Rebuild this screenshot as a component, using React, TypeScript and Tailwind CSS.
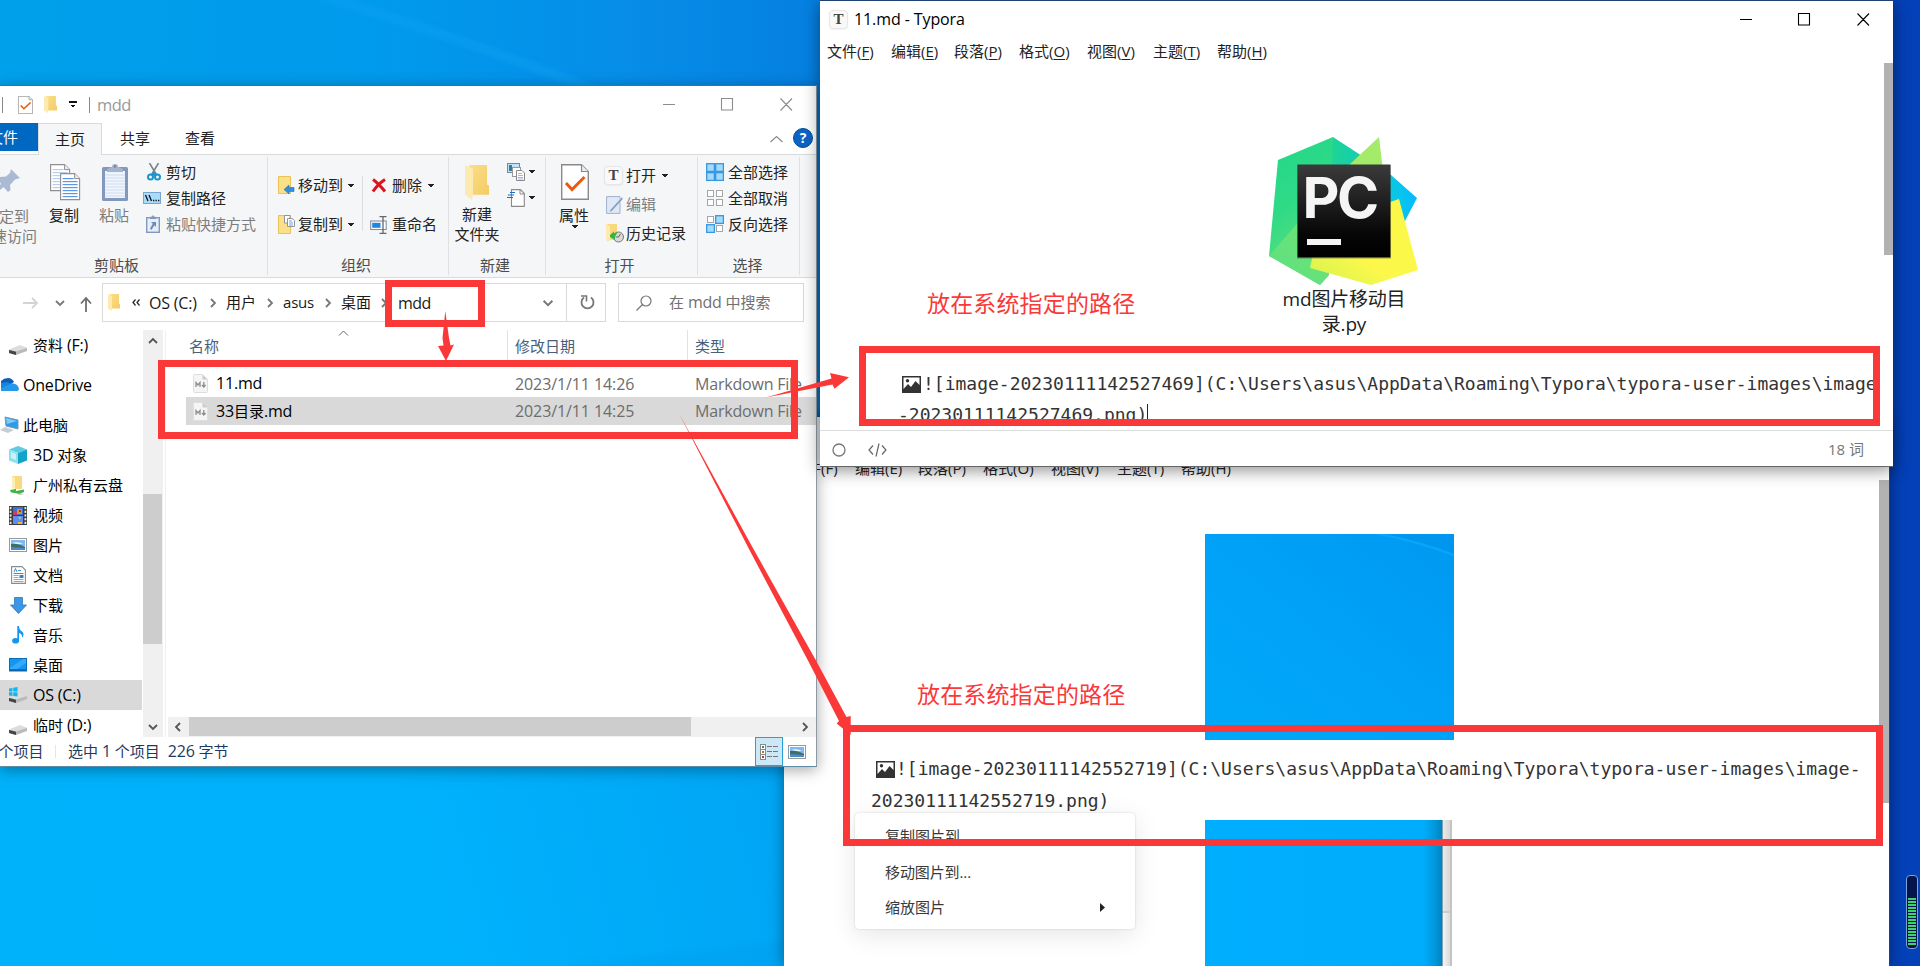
import React from "react";

type Kids = { children?: React.ReactNode; className?: string };

const Row = ({ children, className = "" }: Kids) => (
  <div className={`flex items-center whitespace-nowrap ${className}`}>{children}</div>
);

const Latin = ({ children, className = "" }: Kids) => (
  <span className={`text-[16px] leading-none tracking-[-0.2px] ${className}`}>{children}</span>
);

/* ---------- small glyphs ---------- */

const Caret = ({ className = "" }: Kids) => (
  <svg className={`h-[4px] w-[6px] shrink-0 ${className}`} viewBox="0 0 6 4" shapeRendering="crispEdges">
    <path d="M0 0H6L3 3.4Z" fill="#222" />
  </svg>
);

const Chevron = ({ dir, className = "" }: { dir: "r" | "d" | "u" | "l"; className?: string }) => {
  const d = { r: "M4 2L8 6L4 10", d: "M2 4L6 8L10 4", u: "M2 8L6 4L10 8", l: "M8 2L4 6L8 10" }[dir];
  return (
    <svg className={`h-3 w-3 shrink-0 ${className}`} viewBox="0 0 12 12">
      <path d={d} fill="none" stroke="currentColor" strokeWidth="1.8" />
    </svg>
  );
};

const Folder = ({ className = "" }: Kids) => (
  <svg className={`shrink-0 ${className}`} viewBox="0 0 24 34" preserveAspectRatio="none">
    <defs>
      <linearGradient id="fold" x1="0" y1="0" x2="1" y2="1">
        <stop offset="0" stopColor="#fbdf8b" />
        <stop offset="1" stopColor="#f3cb62" />
      </linearGradient>
    </defs>
    <path d="M4 0H22V19L24 20V29H7Z" fill="url(#fold)" />
    <path d="M0 0L8 4V29L7 34L0 29Z" fill="#fdeab0" />
  </svg>
);

const Page = ({ x, y, w, h, lines }: { x: number; y: number; w: number; h: number; lines: string }) => (
  <g>
    <path d={`M${x} ${y}h${w - 5}l5 5v${h - 5}h${-w}z`} fill="#fff" stroke="#8f8f8f" strokeWidth="1.1" />
    <path d={`M${x + w - 5} ${y}v5h5`} fill="#eee" stroke="#8f8f8f" />
    {[5, 8, 11, 14, 17, 20, 23].map((o) => (
      <path key={o} d={`M${x + 2} ${y + o}h${o === 5 ? w - 8 : w - 4}`} stroke={lines} strokeWidth="1.2" />
    ))}
  </g>
);

const CopyIcon = () => (
  <svg className="h-[37px] w-[31px]" viewBox="0 0 31 37">
    <Page x={0.6} y={0.6} w={19} h={26} lines="#b4cdf0" />
    <Page x={10.6} y={9.6} w={19} h={26} lines="#5b97e8" />
  </svg>
);

const PasteIcon = () => (
  <svg className="h-[37px] w-[26px]" viewBox="0 0 26 37">
    <rect y="3" width="26" height="34" rx="1.5" fill="#8299bd" />
    <rect x="3" y="7" width="20" height="27" fill="#f0f5fc" />
    {[11, 14, 17, 20, 23, 26, 29, 32].map((y) => (
      <path key={y} d={`M3 ${y}h20`} stroke="#cfdcee" />
    ))}
    <path d="M5 8V5l5-2a3 3 0 0 1 6 0l5 2v3z" fill="#a5b3cc" />
    <circle cx="13" cy="2.5" r="1.2" fill="#72809d" />
  </svg>
);

const PinIcon = () => (
  <svg className="h-[26px] w-[21px]" viewBox="0 0 21 26">
    <path d="M11 1L20 10L15 11.5L10 17L10.500 22L8 24L3.500 19L0 22V17L1 16L0 14V9L6 8.500L10 5Z" fill="#a9bad3" />
  </svg>
);

const Scissors = () => (
  <svg className="h-[18px] w-[14px]" viewBox="0 0 14 18">
    <path d="M2.500 0L9 11M11.500 0L5 11" stroke="#7b858d" strokeWidth="1.6" />
    <circle cx="3.500" cy="14" r="2.500" fill="none" stroke="#1d93cf" strokeWidth="2" />
    <circle cx="10.500" cy="14" r="2.500" fill="none" stroke="#1d93cf" strokeWidth="2" />
    <path d="M3.500 11.500L7 8.500L10.500 11.500L7 13Z" fill="#1d93cf" />
  </svg>
);

const PathIcon = () => (
  <svg className="h-[12px] w-[18px]" viewBox="0 0 18 12">
    <rect x=".5" y=".5" width="17" height="11" fill="#a9dcfa" stroke="#77a7cb" />
    <path d="M2.500 3L5 9M6 3L8.500 9" stroke="#111" strokeWidth="1.3" />
    <path d="M10 8.500h1.300M12.500 8.500h1.300M15 8.500h1.300" stroke="#111" strokeWidth="1.3" />
  </svg>
);

const ShortcutIcon = () => (
  <svg className="h-[18px] w-[14px]" viewBox="0 0 14 18">
    <rect x=".7" y="2.700" width="12.600" height="14.600" fill="#e6eefa" stroke="#8299bd" strokeWidth="1.4" />
    <path d="M4 4V2l2-.5L7 0l1 1.500L10 2v2z" fill="#8299bd" />
    <path d="M5 7h5v5l-1.700-1.700L5.500 15L4 13.500L6.800 8.800Z" fill="#6f89b2" />
  </svg>
);

const MoveIcon = () => (
  <svg className="h-[19px] w-[17px]" viewBox="0 0 17 19">
    <path d="M.5.5H12.500V17.500H.5Z" fill="#fbe08a" stroke="#e8c258" />
    <path d="M6 13.500L11 9V11.500H16V15.500H11V18Z" fill="#2f8fe0" stroke="#1b73c0" strokeWidth=".6" />
  </svg>
);

const CopyToIcon = () => (
  <svg className="h-[19px] w-[17px]" viewBox="0 0 17 19">
    <path d="M.5.5H12.500V18.500H.5Z" fill="#fbe08a" stroke="#e8c258" />
    <path d="M6.500.5H12V8H6.500Z" fill="#fff" stroke="#8a8a8a" strokeWidth=".9" />
    <path d="M9.500 3.500H14L16.500 5.500V11.500H9.500Z" fill="#fff" stroke="#8a8a8a" strokeWidth=".9" />
    <path d="M11 6h3M11 8h4M11 10h4" stroke="#5b97e8" strokeWidth=".9" />
  </svg>
);

const DeleteIcon = () => (
  <svg className="h-[15px] w-[16px]" viewBox="0 0 16 15">
    <path d="M2 1.500Q7 5 14 13.500M14 1.500Q7 6 2 13.500" fill="none" stroke="#dd1420" strokeWidth="3.1" />
  </svg>
);

const RenameIcon = () => (
  <svg className="h-[18px] w-[17px]" viewBox="0 0 17 18">
    <rect x=".7" y="5" width="15.500" height="8.500" fill="#fff" stroke="#8a8f96" strokeWidth="1.1" />
    <rect x="2.200" y="6.800" width="8.300" height="5" fill="#1f86e0" />
    <path d="M9.500.7h7M13 .7V17.300M9.500 17.300h7" stroke="#63686e" strokeWidth="1.3" />
  </svg>
);

const NewItemIcon = () => (
  <svg className="h-[18px] w-[18px]" viewBox="0 0 18 18">
    <rect x=".5" y=".5" width="12" height="9" fill="#bfe3f8" stroke="#6a8ba4" />
    <rect x="2" y="2" width="3" height="6" fill="#3c7b8f" />
    <rect x="5.500" y="4.500" width="8" height="9" fill="#fff" stroke="#999" />
    <path d="M9.500 7.500h5.500l2.500 2.500v7.500h-8z" fill="#fff" stroke="#8a8a8a" />
    <path d="M11 10.500h4M11 12.500h5M11 14.500h5M11 16h5" stroke="#7ba9ea" strokeWidth=".8" />
  </svg>
);

const EasyIcon = () => (
  <svg className="h-[18px] w-[18px]" viewBox="0 0 18 18">
    <path d="M4.500.6H13.500L17.300 4.500V17.400H4.500Z" fill="#fff" stroke="#8a8a8a" strokeWidth="1.1" />
    <path d="M13 .6V5H17.300" fill="none" stroke="#8a8a8a" />
    <path d="M3 3.500h5M1 6h6M0 8.500h6" stroke="#1c6fbf" strokeWidth="1.2" />
  </svg>
);

const PropsIcon = ({ className }: { className: string }) => (
  <svg className={className} viewBox="0 0 28 36" preserveAspectRatio="none">
    <path d="M.7.7H20.500L27.300 7.500V35.300H.7Z" fill="#fff" stroke="#8a8a8a" strokeWidth="1.4" />
    <path d="M20.500.7V7.500H27.300" fill="#ececec" stroke="#8a8a8a" strokeWidth="1.2" />
    <path d="M5 19L11 25.500L23.500 13" fill="none" stroke="#ec5a12" strokeWidth="3" />
  </svg>
);

const TyporaIcon = () => (
  <div className="flex h-[19px] w-[19px] shrink-0 items-center justify-center rounded-[4px] border border-[#e6e6e6] bg-[#f9f9f9] font-['Liberation_Serif',serif] text-[15px] leading-none font-bold text-[#444] shadow-xs">
    T
  </div>
);

const EditIcon = () => (
  <svg className="h-[18px] w-[17px]" viewBox="0 0 17 18">
    <path d="M.6.6H14V17.400H.6Z" fill="#dfe8f5" stroke="#9db0cd" />
    <path d="M16 1L4 14L3 16L5.500 15.500L17 3Z" fill="#7f9cc9" stroke="#fff" strokeWidth=".4" />
  </svg>
);

const HistoryIcon = () => (
  <svg className="h-[19px] w-[18px]" viewBox="0 0 18 19">
    <path d="M1 0H11V16H4L1 17Z" fill="#f8d878" />
    <path d="M0 0L4 2V16L3 18L0 15Z" fill="#fdeab0" />
    <circle cx="12.500" cy="13" r="5" fill="#d7dad7" stroke="#777" />
    <path d="M12.500 13L14.500 10M12.500 13H10" stroke="#444" strokeWidth=".8" />
    <path d="M4 11L8 7.500V9.500L12 8Q8.500 12 9 16L4 13Z" fill="#2fb34a" />
  </svg>
);

const Squares = ({ on }: { on: [boolean, boolean, boolean, boolean] }) => (
  <svg className="h-[18px] w-[18px]" viewBox="0 0 18 18">
    {on.map((v, i) => {
      const x = (i % 2) * 9;
      const y = Math.floor(i / 2) * 9;
      return v ? (
        <rect key={i} x={x + 0.7} y={y + 0.7} width="7.700" height="7.700" fill="#a5dbfa" stroke="#3596e0" strokeWidth="1.3" />
      ) : (
        <rect key={i} x={x + 1.5} y={y + 1.5} width="6" height="6" fill="#fff" stroke="#a6a6a6" />
      );
    })}
  </svg>
);

/* ---------- navigation pane icons ---------- */

const Drive = ({ win = false }: { win?: boolean }) => (
  <svg className="h-[18px] w-[19px]" viewBox="0 0 19 18">
    <path d="M0 11L11 7L18 9V12L7 16L0 14Z" fill="#b9b9b9" />
    <path d="M0 10.500L11 6L18 9L7 12.500Z" fill="#dcdcdc" />
    <path d="M0 11L7 12.700V16L0 14Z" fill="#454545" />
    {win && (
      <g fill="#13b5ea">
        <path d="M0 1.500L3.500 1V4.500H0ZM4.300 .8L8.500 0V4.500H4.300ZM0 5.300H3.500V9L0 8.500ZM4.300 5.300H8.500V9.500L4.300 9Z" />
      </g>
    )}
  </svg>
);

const Cloud = () => (
  <svg className="h-[14px] w-[18px]" viewBox="0 0 18 14">
    <path d="M0 3Q3 0 7 0Q11 0 13 4L6 9L0 8Z" fill="#0f5cb5" />
    <path d="M0 5L6 4L17 9Q19 13 15 13H0Z" fill="#1683dc" />
    <path d="M0 10L10 5.500Q16 5 17.500 9.500Q18 13 15 13H0Z" fill="#2598ea" />
  </svg>
);

const PcIcon = () => (
  <svg className="h-[18px] w-[19px]" viewBox="0 0 19 18">
    <path d="M5 1L18 4V13L6 10Z" fill="#2c9be8" stroke="#7a97ab" strokeWidth="1" />
    <path d="M6 2L17 5L7 8Z" fill="#7dcbf7" />
    <path d="M0 14L5 11L14 14L8 17Z" fill="#c6cdd3" />
  </svg>
);

const CubeIcon = () => (
  <svg className="h-[18px] w-[18px]" viewBox="0 0 18 18">
    <path d="M9 0L18 3.500L9 7L0 3.500Z" fill="#5fcbe2" />
    <path d="M0 3.500L9 7V18L0 14.500Z" fill="#8fe0ec" />
    <path d="M18 3.500L9 7V18L18 14.500Z" fill="#12a3c9" />
    <path d="M2 6L7 8V14L2 12Z" fill="#c8f2f7" />
  </svg>
);

const NetFolder = () => (
  <svg className="h-[19px] w-[17px]" viewBox="0 0 17 19">
    <path d="M2 0H12V13H4Z" fill="#f8da80" />
    <path d="M2 0L5 2V13L2 12Z" fill="#fdeeb8" />
    <path d="M0 14L6 13V15L14 13.500V16L9 18L5 17L1 16.500Z" fill="#3eb34a" />
    <path d="M9 17L14 18.500H8Z" fill="#aaa" />
  </svg>
);

const FilmIcon = () => (
  <svg className="h-[19px] w-[18px]" viewBox="0 0 18 19">
    <rect width="18" height="19" fill="#3d3d3d" />
    {[1, 4.700, 8.400, 12.100, 15.800].map((y) => (
      <g key={y} fill="#e9e9e9">
        <rect x=".7" y={y} width="1.800" height="2.200" />
        <rect x="15.500" y={y} width="1.800" height="2.200" />
      </g>
    ))}
    <rect x="4" y="1" width="10" height="8" fill="#3f6fd0" />
    <rect x="4" y="10" width="10" height="8" fill="#5c8ff0" />
    <path d="M8 3h5v5H8z" fill="#d09a2a" />
    <path d="M4 6h4v3H4z" fill="#cf3c6a" />
    <path d="M9 16h4v2H9zM9 11h3l-1 3z" fill="#f2bb26" />
    <path d="M10 4h2v2h-2z" fill="#b12d1d" />
  </svg>
);

const PhotoIcon = ({ className = "h-[14px] w-[18px]" }: { className?: string }) => (
  <svg className={className} viewBox="0 0 18 14" preserveAspectRatio="none">
    <rect x=".5" y=".5" width="17" height="13" fill="#fff" stroke="#999" />
    <rect x="2" y="2" width="14" height="10" fill="#7fb9f5" />
    <path d="M2 6Q8 5 16 9V12H2Z" fill="#3f6f62" />
    <path d="M2 9L16 10V12H2Z" fill="#4b8bc9" />
    <path d="M3 5Q9 3 14 6L9 6Z" fill="#eef7ff" />
  </svg>
);

const DocIcon = () => (
  <svg className="h-[18px] w-[15px]" viewBox="0 0 15 18">
    <path d="M.6.6H11L14.400 4V17.400H.6Z" fill="#fff" stroke="#8c8c8c" strokeWidth="1.1" />
    <path d="M3 6L4.500 2.500L6 6M7 4.500h3M2.500 7.500h10" stroke="#2d8fd9" fill="none" />
    <path d="M2.500 9.500h5M2.500 11.500h5M2.500 13.500h10M2.500 15.500h10" stroke="#999" strokeWidth=".9" />
    <rect x="8.500" y="9" width="4" height="3" fill="#3a7fc0" />
  </svg>
);

const DownIcon = () => (
  <svg className="h-[17px] w-[17px]" viewBox="0 0 17 17">
    <path d="M4.500.5H12.500V8H16.500L8.500 16.500L.5 8H4.500Z" fill="#3a97e8" stroke="#2b78bd" strokeWidth=".8" />
  </svg>
);

const MusicIcon = () => (
  <svg className="h-[18px] w-[12px]" viewBox="0 0 12 18">
    <ellipse cx="3.600" cy="14.700" rx="3.500" ry="2.800" fill="#1197f0" />
    <path d="M5.300 0H7Q7 3.500 10 5.500Q13 8 10 12Q10.500 8 7 7V15H5.300Z" fill="#1197f0" />
  </svg>
);

const DesktopIcon = () => (
  <svg className="h-[14px] w-[18px]" viewBox="0 0 18 14">
    <rect x=".5" y=".5" width="17" height="12.500" fill="#1296f2" stroke="#0b6dba" />
    <path d="M1 10L14 1H17V5L8 11H1Z" fill="#37abfb" />
    <path d="M1 12h16" stroke="#0a5590" strokeWidth="1.2" />
  </svg>
);

const MdFile = () => (
  <svg className="h-[19px] w-[15px] shrink-0" viewBox="0 0 15 19">
    <path d="M1.500.5H9.500L14.500 5.500V17.500Q14.500 18.500 13.500 18.500H1.500Q.5 18.500 .5 17.500V1.500Q.5.5 1.500.5Z" fill="#f5f5f5" stroke="#dedede" />
    <path d="M9.500 .5V5.500H14.500Z" fill="#ccc" />
    <path d="M3 13V8.500L5 11L7 8.500V13" stroke="#8d8d8d" strokeWidth="1.3" fill="none" />
    <path d="M10.800 8V12.500M9 11L10.800 13L12.600 11" stroke="#8d8d8d" strokeWidth="1.3" fill="none" />
  </svg>
);

/* ---------- explorer ---------- */

const Group = ({ children, className = "", label, labelClass = "" }: Kids & { label: string; labelClass?: string }) => (
  <div className={`flex h-[118px] shrink-0 flex-col border-r border-[#dfe0e2] ${className}`}>
    <div className="flex h-[98px] items-start">{children}</div>
    <div className={`text-center leading-[20px] text-[#4c4c4c] ${labelClass}`}>{label}</div>
  </div>
);

const navItems: { label: React.ReactNode; icon: React.ReactNode; root?: boolean; gap?: boolean; active?: boolean }[] = [
  { label: <>资料 <Latin>(F:)</Latin></>, icon: <span className="mt-[5px]"><Drive /></span> },
  { label: <Latin>OneDrive</Latin>, icon: <Cloud />, root: true, gap: true },
  { label: "此电脑", icon: <PcIcon />, root: true, gap: true },
  { label: <><Latin>3D</Latin> 对象</>, icon: <CubeIcon /> },
  { label: "广州私有云盘", icon: <NetFolder /> },
  { label: "视频", icon: <FilmIcon /> },
  { label: "图片", icon: <PhotoIcon /> },
  { label: "文档", icon: <DocIcon /> },
  { label: "下载", icon: <DownIcon /> },
  { label: "音乐", icon: <MusicIcon /> },
  { label: "桌面", icon: <DesktopIcon /> },
  { label: <Latin>OS (C:)</Latin>, icon: <span className="mt-[2px]"><Drive win /></span>, active: true },
  { label: <>临时 <Latin>(D:)</Latin></>, icon: <span className="mt-[5px]"><Drive /></span> },
];

const Ribbon = () => (
  <div className="flex h-[124px] border-y border-[#d9dadc] bg-[#f5f6f7] pt-[2px] text-[#222]">
    <Group label="剪贴板" className="w-[268px]" labelClass="pr-[34px]">
      <div className="flex w-[40px] flex-col overflow-hidden text-[#7d7d7d]">
        <div className="mt-[11px] h-[38px]"><PinIcon /></div>
        <div className="-ml-[16px] leading-[20px] whitespace-nowrap">固定到</div>
        <div className="-ml-[23px] leading-[20px] whitespace-nowrap">快速访问</div>
      </div>
      <div className="flex w-[48px] flex-col items-center pt-[7px] pl-[2px]">
        <CopyIcon />
        <div className="mt-[4px] pr-[2px] leading-[20px]">复制</div>
      </div>
      <div className="flex w-[52px] flex-col items-center pt-[7px] pl-[2px] text-[#7d7d7d]">
        <PasteIcon />
        <div className="mt-[4px] pr-[2px] leading-[20px]">粘贴</div>
      </div>
      <div className="flex flex-col pt-[2px] pl-[3px]">
        <Row className="h-[26px]"><span className="flex w-[23px] pl-[4px]"><Scissors /></span>剪切</Row>
        <Row className="h-[26px]"><span className="flex w-[23px]"><PathIcon /></span>复制路径</Row>
        <Row className="h-[26px] text-[#7d7d7d]"><span className="flex w-[23px] pl-[3px]"><ShortcutIcon /></span>粘贴快捷方式</Row>
      </div>
    </Group>
    <Group label="组织" className="w-[181px]" labelClass="pr-[4px]">
      <div className="flex flex-col pt-[9px] pl-[10px]">
        <Row className="h-[39px]"><MoveIcon /><span className="ml-[3px]">移动到</span><Caret className="ml-[5px]" /></Row>
        <Row className="h-[39px]"><CopyToIcon /><span className="ml-[3px]">复制到</span><Caret className="ml-[5px]" /></Row>
      </div>
      <div className="mt-[19px] ml-[8px] h-[55px] w-px bg-[#dcdddf]" />
      <div className="flex flex-col pt-[9px] pl-[7px]">
        <Row className="h-[39px]"><span className="flex w-[22px] pl-[1px]"><DeleteIcon /></span>删除<Caret className="ml-[6px]" /></Row>
        <Row className="h-[39px]"><span className="flex w-[22px]"><RenameIcon /></span>重命名</Row>
      </div>
    </Group>
    <Group label="新建" className="w-[97px]" labelClass="pr-[4px]">
      <div className="flex w-[56px] flex-col items-center pt-[8px]">
        <Folder className="h-[35px] w-[24px]" />
        <div className="mt-[4px] text-center leading-[20px]">新建<br />文件夹</div>
      </div>
      <div className="flex flex-col gap-[8px] pt-[6px] pl-[2px]">
        <Row><NewItemIcon /><Caret className="ml-[4px]" /></Row>
        <Row><EasyIcon /><Caret className="ml-[4px]" /></Row>
      </div>
    </Group>
    <Group label="打开" className="w-[152px]" labelClass="pr-[4px]">
      <div className="flex w-[56px] flex-col items-center pt-[7px] pl-[2px]">
        <PropsIcon className="h-[36px] w-[28px]" />
        <div className="mt-[5px] pr-[2px] leading-[20px]">属性</div>
        <Caret />
      </div>
      <div className="flex flex-col pt-[4px] pl-[2px]">
        <Row className="h-[29px]"><span className="flex w-[22px]"><TyporaIcon /></span>打开<Caret className="ml-[6px]" /></Row>
        <Row className="h-[29px] text-[#7d7d7d]"><span className="flex w-[22px] pl-[2px]"><EditIcon /></span>编辑</Row>
        <Row className="h-[29px]"><span className="flex w-[22px] pl-[2px]"><HistoryIcon /></span>历史记录</Row>
      </div>
    </Group>
    <Group label="选择" className="w-[102px]" labelClass="pr-[2px]">
      <div className="flex flex-col pt-[2px] pl-[8px]">
        <Row className="h-[26px] gap-[4px]"><Squares on={[true, true, true, true]} />全部选择</Row>
        <Row className="h-[26px] gap-[4px]"><Squares on={[false, false, false, false]} />全部取消</Row>
        <Row className="h-[26px] gap-[4px]"><Squares on={[false, true, true, false]} />反向选择</Row>
      </div>
    </Group>
  </div>
);

const FileRow = ({ name, date, className = "" }: { name: React.ReactNode; date: string; className?: string }) => (
  <div className={`ml-[20px] flex items-center whitespace-nowrap ${className}`}>
    <span className="flex w-[30px] pl-[7px]"><MdFile /></span>
    <span className="w-[299px] text-black">{name}</span>
    <span className="w-[180px] text-[16px] tracking-[-0.1px] text-[#6d6d6d]">{date}</span>
    <span className="text-[16px] tracking-[-0.2px] text-[#6d6d6d]">Markdown File</span>
  </div>
);

const Explorer = () => (
  <div className="absolute top-[85px] left-0 flex h-[682px] w-[817px] flex-col overflow-hidden border-t border-r border-b border-t-[#2e78a8] border-r-[#8d9aa4] border-b-[#5d8ba8] bg-white text-[15px] shadow-[0_3px_14px_rgba(0,0,0,0.35)]">
    <Row className="h-[37px]">
      <div className="ml-[2px] h-[16px] w-px bg-[#888]" />
      <PropsIcon className="ml-[15px] h-[18px] w-[15px]" />
      <Folder className="ml-[11px] h-[17px] w-[13px]" />
      <svg className="ml-[12px] h-[7px] w-[8px]" viewBox="0 0 8 7" shapeRendering="crispEdges">
        <path d="M0 0H8V1.500H0ZM1 3.500H7L4 7Z" fill="#111" />
      </svg>
      <div className="ml-[12px] h-[16px] w-px bg-[#888]" />
      <span className="ml-[7px] text-[16.5px] leading-[20px] tracking-[-0.5px] text-[#999]">mdd</span>
      <svg className="ml-auto h-[13px] w-[130px]" viewBox="0 0 130 13">
        <path d="M0 6.500h12M58.500.5h11v11.500h-11ZM117.500.5l11.500 12M129 .5l-11.500 12" fill="none" stroke="#8c8c8c" strokeWidth="1.1" />
      </svg>
      <div className="w-[23px]" />
    </Row>
    <div className="flex h-[31px]">
      <div className="flex h-[28px] w-[38px] items-center overflow-hidden bg-[#0068c0] text-white">
        <span className="-ml-[12px] whitespace-nowrap">文件</span>
      </div>
      <div className="relative z-10 -mb-px flex h-[32px] w-[64px] items-center justify-center border border-b-0 border-[#d9dadc] bg-[#f5f6f7] pb-px text-[#222]">主页</div>
      <div className="flex w-[66px] items-center justify-center text-[#222]">共享</div>
      <div className="flex w-[64px] items-center justify-center text-[#222]">查看</div>
      <Row className="mr-[3px] ml-auto">
        <svg className="h-[8px] w-[13px]" viewBox="0 0 13 8"><path d="M.5 7L6.500 1.500L12.500 7" fill="none" stroke="#8a8a8a" strokeWidth="1.2" /></svg>
        <span className="mb-[2px] ml-[10px] flex h-[20px] w-[20px] items-center justify-center rounded-full border border-[#084a92] bg-[#0a64c4] text-[14px] leading-none font-bold text-white">?</span>
      </Row>
    </div>
    <Ribbon />
    <div className="flex h-[51px] items-start pt-[5px]">
      <Row className="h-[39px] w-[102px] text-[#777]">
        <svg className="ml-[23px] h-[12px] w-[15px]" viewBox="0 0 15 12"><path d="M0 6H14M9 1L14 6L9 11" fill="none" stroke="#d3d3d3" strokeWidth="1.8" /></svg>
        <Chevron dir="d" className="ml-[16px]" />
        <svg className="mt-[3px] ml-[14px] h-[15px] w-[12px]" viewBox="0 0 12 15"><path d="M6 15V1M1 6.500L6 1L11 6.500" fill="none" stroke="#6f6f6f" strokeWidth="1.8" /></svg>
      </Row>
      <Row className="h-[39px] w-[504px] border border-[#d9d9d9] text-[#1a1a1a]">
        <Folder className="ml-[5px] h-[17px] w-[12px]" />
        <svg className="ml-[12px] h-[7px] w-[8px]" viewBox="0 0 8 7"><path d="M3.500.5L1 3.500L3.500 6.500M7.500.5L5 3.500L7.500 6.500" fill="none" stroke="#222" strokeWidth="1.2" /></svg>
        <span className="ml-[9px] w-[58px] text-[16px] tracking-[-0.2px]">OS (C:)</span>
        <Chevron dir="r" className="text-[#777]" />
        <span className="ml-[7px] w-[38px]">用户</span>
        <Chevron dir="r" className="text-[#777]" />
        <span className="ml-[7px] w-[39px] tracking-[-0.2px]">asus</span>
        <Chevron dir="r" className="text-[#777]" />
        <span className="ml-[7px] w-[37px]">桌面</span>
        <Chevron dir="r" className="text-[#777]" />
        <span className="ml-[8px] text-[16px] tracking-[-0.5px]">mdd</span>
        <Row className="ml-auto h-full w-[63px] text-[#777]">
          <Chevron dir="d" className="scale-110" />
          <div className="ml-[12px] h-full w-px bg-[#d9d9d9]" />
          <svg className="ml-[13px] h-[15px] w-[15px]" viewBox="0 0 15 15">
            <path d="M11 2.500A6 6 0 1 1 4 2.500" fill="none" stroke="#777" strokeWidth="1.8" />
            <path d="M1 1H6.500V6.500" fill="none" stroke="#777" strokeWidth="1.6" />
          </svg>
        </Row>
      </Row>
      <Row className="ml-[12px] h-[39px] w-[186px] border border-[#d9d9d9] text-[#717171]">
        <svg className="ml-[17px] h-[16px] w-[16px]" viewBox="0 0 16 16"><circle cx="10" cy="6" r="5" fill="none" stroke="#777" strokeWidth="1.200" /><path d="M6.500 9.500L.5 15.500" stroke="#777" strokeWidth="1.200" /></svg>
        <span className="ml-[17px]">在 <Latin>mdd</Latin> 中搜索</span>
      </Row>
    </div>
    <div className="flex h-[408px] overflow-hidden pt-[1px]">
      <div className="flex w-[143px] flex-col overflow-hidden text-black">
        {navItems.map((n, i) => (
          <Row key={i} className={`h-[30px] w-[142px] shrink-0 ${n.gap ? "mt-[10px]" : ""} ${n.active ? "bg-[#d9d9d9]" : ""}`}>
            <span className={`flex shrink-0 justify-center ${n.root ? "w-[19px]" : "ml-[8px] w-[20px]"}`}>{n.icon}</span>
            <span className={n.root ? "ml-[4px]" : "ml-[5px]"}>{n.label}</span>
          </Row>
        ))}
      </div>
      <div className="flex h-[408px] w-[20px] flex-col items-center bg-[#f0f0f0] text-[#555]">
        <Chevron dir="u" className="mt-[5px]" />
        <div className="mt-[147px] h-[150px] w-full border-r border-[#f0f0f0] bg-[#cdcdcd]" />
        <Chevron dir="d" className="mt-auto mb-[5px]" />
      </div>
      <div className="ml-[2px] flex flex-1 flex-col border-l border-[#f0f0f0]">
        <div className="flex h-[30px] items-stretch text-[#4a607a]">
          <div className="flex w-[342px] items-center border-r border-[#e2e2e2] pl-[23px]">
            <span className="w-[149px] pt-[3px]">名称</span>
            <svg className="h-[6px] w-[11px] self-start" viewBox="0 0 11 6"><path d="M1 5.500L5.500 1L10 5.500" fill="none" stroke="#666" /></svg>
          </div>
          <div className="flex w-[180px] items-center border-r border-[#e2e2e2] pt-[3px] pl-[7px]">修改日期</div>
          <div className="flex items-center pt-[3px] pl-[7px]">类型</div>
        </div>
        <FileRow className="mt-[10px] h-[27px]" name={<Latin>11.md</Latin>} date="2023/1/11 14:26" />
        <FileRow className="h-[28px] bg-[#d9d9d9]" name={<><Latin>33</Latin>目录<Latin>.md</Latin></>} date="2023/1/11 14:25" />
        <div className="mt-auto ml-[2px] flex h-[20px] items-center bg-[#f0f0f0] text-[#555]">
          <Chevron dir="l" className="ml-[4px]" />
          <div className="ml-[5px] h-[19px] w-[502px] self-start bg-[#cdcdcd]" />
          <Chevron dir="r" className="mr-[5px] ml-auto" />
        </div>
      </div>
    </div>
    <Row className="h-[29px] text-[#1f3a5f]">
      <span className="-ml-[14px] w-[69px]">2 个项目</span>
      <div className="h-[13px] w-px bg-[#e6e6e6]" />
      <span className="ml-[12px]">选中 <Latin>1</Latin> 个项目</span>
      <span className="ml-[8px]"><Latin>226</Latin> 字节</span>
      <div className="ml-auto flex h-[29px] w-[28px] items-center justify-center border border-[#26a0da] bg-[#cce8f6]">
        <svg className="h-[16px] w-[18px]" viewBox="0 0 18 16" shapeRendering="crispEdges">
          <path d="M.5.5H5.500V15.500H.5ZM.5 5.500H5.500M.5 10.500H5.500" fill="#fff" stroke="#8a8a8a" />
          <path d="M2 2h2v2H2z" fill="#3c8a6a" /><path d="M2 7h2v2H2z" fill="#b07f1c" /><path d="M2 12h2v2H2z" fill="#c0392b" />
          <path d="M7 2.500h5M13 2.500h5M7 7.500h5M13 7.500h5M7 12.500h5M13 12.500h5" stroke="#777" />
        </svg>
      </div>
      <div className="mr-[10px] ml-[5px] flex"><PhotoIcon /></div>
    </Row>
  </div>
);

/* ---------- typora ---------- */

const menus: [string, string, string][] = [
  ["文件", "F", "w-[64px]"],
  ["编辑", "E", "w-[63px]"],
  ["段落", "P", "w-[65px]"],
  ["格式", "O", "w-[68px]"],
  ["视图", "V", "w-[66px]"],
  ["主题", "T", "w-[64px]"],
  ["帮助", "H", "w-[60px]"],
];

const MenuBar = ({ keys = false }: { keys?: boolean }) => (
  <Row className="h-[20px] shrink-0 pl-[7px] text-[15px] leading-[20px] text-[#222]">
    {menus.map(([zh, key, w]) => (
      <span key={key} className={`shrink-0 ${w}`}>
        {zh}(<span className={keys ? "underline underline-offset-2" : ""}>{key}</span>)
      </span>
    ))}
  </Row>
);

const BrokenImage = () => (
  <svg className="h-[17px] w-[19px] shrink-0" viewBox="0 0 19 17">
    <path d="M0 0H19V17H0ZM1.500 1.500V13L6 8L9 11L13.500 5L17.500 9V1.500Z" fill="#333" fillRule="evenodd" />
    <circle cx="5.500" cy="4.700" r="1.700" fill="#333" />
  </svg>
);

const PyCharm = () => (
  <div className="relative h-[150px] w-[151px]">
    <svg className="h-[150px] w-[151px]" viewBox="0 0 151 150">
      <defs>
        <linearGradient id="g1" x1="0" y1="0" x2=".3" y2="1">
          <stop offset="0" stopColor="#21d789" /><stop offset=".5" stopColor="#2fda86" /><stop offset="1" stopColor="#62e07c" />
        </linearGradient>
        <linearGradient id="g2" x1="0" y1="0" x2="1" y2="0">
          <stop offset="0" stopColor="#21d789" /><stop offset=".45" stopColor="#14cdb4" /><stop offset=".85" stopColor="#08c4f0" /><stop offset="1" stopColor="#07b8ff" />
        </linearGradient>
        <linearGradient id="g3" x1="0" y1="1" x2="1" y2="0">
          <stop offset="0" stopColor="#d2f352" /><stop offset=".4" stopColor="#fcf84a" /><stop offset="1" stopColor="#fcf84a" />
        </linearGradient>
        <linearGradient id="g4" x1="0" y1="0" x2="0" y2="1">
          <stop offset="0" stopColor="#3b3b3b" /><stop offset=".75" stopColor="#060606" /><stop offset="1" stopColor="#000" />
        </linearGradient>
        <linearGradient id="g5" x1="0" y1="1" x2="1" y2="0">
          <stop offset="0" stopColor="#5fdf85" /><stop offset="1" stopColor="#6de56f" />
        </linearGradient>
      </defs>
      <path d="M64 0L90 17L122 38L148 61L136 84L100 110L50 80Z" fill="url(#g2)" />
      <path d="M9 23L64 0L62 60L60 138L51 148L0 119Z" fill="url(#g1)" />
      <path d="M0 119L34 80L60 138L51 148Z" fill="url(#g5)" />
      <path d="M110 0L80 28V50H116Z" fill="#a4eb69" />
      <path d="M130 62L149 133L102 148L41 131L50 90Z" fill="url(#g3)" />
      <rect x="28" y="28" width="94" height="94" fill="#333" opacity=".25" />
      <rect x="28.500" y="27.500" width="93" height="93" fill="url(#g4)" />
      <rect x="38" y="102" width="34" height="6" fill="#f5f5f5" />
    </svg>
    <div className="absolute top-[31px] left-[34px] flex font-['Inter',sans-serif] text-[57px] leading-[60px] font-bold tracking-[-2.500px] text-[#f5f5f5]">
      PC
    </div>
  </div>
);

const mono = "font-['DejaVu_Sans_Mono',monospace] text-[18px] leading-[32px] whitespace-pre text-[#333]";

const FrontTypora = () => (
  <div className="absolute top-0 left-[820px] flex h-[467px] w-[1073px] flex-col overflow-hidden border-t border-b border-t-[#1f4275] border-b-[#666] bg-white shadow-[0_3px_16px_rgba(0,0,0,0.45)]">
    <Row className="h-[36px] shrink-0 text-[16px] text-black">
      <span className="ml-[9px]"><TyporaIcon /></span>
      <span className="ml-[6px] tracking-[-0.1px]">11.md - Typora</span>
      <svg className="mr-[23px] ml-auto h-[13px] w-[130px]" viewBox="0 0 130 13">
        <path d="M0 6.500h12M58.500.5h11v11.500h-11ZM117.500.5l11.500 12M129 .5l-11.500 12" fill="none" stroke="#000" strokeWidth="1.100" />
      </svg>
    </Row>
    <div className="h-[4px] shrink-0" />
    <MenuBar keys />
    <div className="flex h-[369px] shrink-0 overflow-hidden">
      <div className="flex w-[1064px] flex-col">
        <div className="mt-[76px] flex h-[205px] w-[1048px] flex-col items-center">
          <PyCharm />
          <div className="text-center text-[19px] leading-[25px] tracking-[-0.2px] text-[#222]">
            md图片移动目<br />录.py
          </div>
        </div>
        <Row className="mt-[26px] h-[32px] pl-[82px]">
          <BrokenImage />
          <span className={`ml-[2px] ${mono}`}>{"![image-20230111142527469](C:\\Users\\asus\\AppData\\Roaming\\Typora\\typora-user-images\\image"}</span>
        </Row>
        <div className="-mt-px flex h-[20px] overflow-hidden pl-[78px]">
          <span className={mono}>-20230111142527469.png)</span>
          <div className="mt-[5px] h-[22px] w-px shrink-0 bg-[#222]" />
        </div>
      </div>
      <div className="mt-[2px] h-[192px] w-[9px] bg-[#b2b2b2]" />
    </div>
    <Row className="h-[36px] shrink-0 border-t border-[#ddd] pt-[2px] text-[15px] text-[#777]">
      <svg className="ml-[12px] h-[14px] w-[14px]" viewBox="0 0 14 14"><circle cx="7" cy="7" r="6" fill="none" stroke="#777" strokeWidth="1.300" /></svg>
      <svg className="ml-[22px] h-[14px] w-[19px]" viewBox="0 0 19 14"><path d="M5 2.500L1 7L5 11.500M14 2.500L18 7L14 11.500M11 .5L8 13.500" fill="none" stroke="#666" strokeWidth="1.200" /></svg>
      <span className="mr-[29px] ml-auto">18 词</span>
    </Row>
  </div>
);

const BackTypora = () => (
  <div className="absolute top-[417px] left-[784px] flex h-[549px] w-[1106px] flex-col border-r border-[#24408a] bg-white shadow-[0_0_14px_rgba(0,0,0,0.4)]">
    <div className="h-[41px] shrink-0" />
    <MenuBar />
    <div className="flex flex-1 overflow-hidden">
      <div className="flex w-[1095px] flex-col">
        <div className="mt-[56px] ml-[421px] h-[206px] w-[249px] shrink-0 bg-linear-to-tr from-[#00a8f8] via-[#00a2f8] to-[#0098f0]">
          <svg className="h-full w-full" viewBox="0 0 249 206">
            <path d="M170 0H249V20Z" fill="#0091ea" opacity=".4" />
            <path d="M170 -1Q215 8 249 21" stroke="#08adff" strokeWidth="2.500" fill="none" opacity=".7" />
          </svg>
        </div>
        <Row className="mt-[13px] h-[32px] pl-[92px]">
          <BrokenImage />
          <span className={`ml-[1px] ${mono}`}>{"![image-20230111142552719](C:\\Users\\asus\\AppData\\Roaming\\Typora\\typora-user-images\\image-"}</span>
        </Row>
        <div className={`pl-[87px] ${mono}`}>20230111142552719.png)</div>
        <div className="mt-[3px] ml-[421px] flex flex-1">
          <div className="w-[237px] bg-[linear-gradient(to_right,#00aeff_0%,#00adfc_92%,#0098dc_97%,#0082bd_100%)]" />
          <div className="flex w-[10px] flex-col border-r-2 border-l border-r-[#c4c4c4] border-l-[#7fa2b5]">
            <div className="h-[93px] border-b-2 border-[#ccc] bg-linear-to-r from-[#e8e8e8] to-[#d5d8d8]" />
            <div className="flex-1 bg-linear-to-r from-[#f5f5f5] to-[#dadada]" />
          </div>
        </div>
      </div>
      <div className="mt-[2px] h-[323px] w-[10px] bg-[#b2b2b2]" />
    </div>
  </div>
);

const ContextMenu = () => (
  <div className="absolute top-[813px] left-[855px] flex h-[116px] w-[280px] flex-col rounded-[4px] bg-white pt-[5px] pl-[30px] text-[15px] text-[#3a3a3a] shadow-[0_6px_26px_rgba(0,0,0,0.1),0_0_2px_rgba(0,0,0,0.18)]">
    <Row className="h-[36px]">复制图片到...</Row>
    <Row className="h-[36px] tracking-[-0.1px]">移动图片到...</Row>
    <Row className="h-[35px] justify-between pr-[30px]">
      缩放图片
      <svg className="h-[9px] w-[5px]" viewBox="0 0 5 9"><path d="M0 0L5 4.500L0 9Z" fill="#222" /></svg>
    </Row>
  </div>
);

/* ---------- desktop ---------- */

const Wallpaper = () => (
  <svg className="absolute inset-0 h-full w-full" viewBox="0 0 1920 966" preserveAspectRatio="none">
    <defs>
      <linearGradient id="sky" x1="0" y1="0" x2="1920" y2="0" gradientUnits="userSpaceOnUse">
        <stop offset="0" stopColor="#00a0ea" /><stop offset=".2" stopColor="#009aec" /><stop offset=".33" stopColor="#068de8" />
        <stop offset=".43" stopColor="#057fe0" /><stop offset=".48" stopColor="#0566c8" /><stop offset=".9" stopColor="#0440b8" /><stop offset="1" stopColor="#0440b8" />
      </linearGradient>
      <linearGradient id="floor" x1="0" y1="966" x2="820" y2="760" gradientUnits="userSpaceOnUse">
        <stop offset="0" stopColor="#00b2fa" /><stop offset=".5" stopColor="#00b2fd" /><stop offset="1" stopColor="#00a4f4" />
      </linearGradient>
      <filter id="soft"><feGaussianBlur stdDeviation="3" /></filter>
    </defs>
    <rect width="1920" height="966" fill="url(#sky)" />
    <path d="M300 -10Q440 30 600 92" stroke="#14a6f4" strokeWidth="7" fill="none" opacity=".45" filter="url(#soft)" />
    <rect y="700" width="820" height="266" fill="url(#floor)" />
    <path d="M560 966Q700 952 790 940V966Z" fill="#009ff0" opacity=".5" filter="url(#soft)" />
  </svg>
);

const Meter = () => (
  <div className="absolute top-[875px] left-[1906px] flex h-[74px] w-[12px] flex-col justify-end overflow-hidden rounded-[4px] border border-[#7ea0dc] bg-[#03154a] px-px pb-[3px]">
    <div className="h-[47px] bg-[repeating-linear-gradient(to_bottom,#3fd070_0px,#3fd070_2px,#03154a_2px,#03154a_3px)]" />
  </div>
);

const Annotations = () => (
  <>
    <div className="absolute top-[280px] left-[385px] h-[47px] w-[100px] border-[7px] border-[#fb3838]" />
    <div className="absolute top-[360px] left-[158px] h-[79px] w-[640px] border-[7px] border-[#fb3838]" />
    <div className="absolute top-[346px] left-[859px] h-[80px] w-[1021px] border-[7px] border-[#fb3838]" />
    <div className="absolute top-[725px] left-[843px] h-[121px] w-[1040px] border-[7px] border-[#fb3838]" />
    <div className="absolute top-[288px] left-[927px] text-[23px] leading-[30px] tracking-[0.150px] whitespace-nowrap text-[#fb3838]">放在系统指定的路径</div>
    <div className="absolute top-[679px] left-[917px] text-[23px] leading-[30px] tracking-[0.150px] whitespace-nowrap text-[#fb3838]">放在系统指定的路径</div>
    <svg className="pointer-events-none absolute inset-0 h-full w-full" viewBox="0 0 1920 966">
      <g fill="#fb3838">
        <path d="M445.300 311L449 338L450.500 345.500L454 344.500L446 361L438 346L443.500 345.500L442.500 338Z" />
        <path d="M766 397.500L831.500 378.500L830 373L849 377.300L834.500 388.700L832.500 384.500Z" />
        <path d="M679 413.500L754 550L815.700 660L846.500 717L850.700 716V735L836.700 723.500L839 721L807.700 660L749.500 550Z" />
      </g>
    </svg>
  </>
);

export default function App() {
  return (
    <div className="relative h-[966px] w-[1920px] overflow-hidden bg-[#0440b8] font-['Open_Sans','Noto_Sans_CJK_SC',sans-serif]">
      <Wallpaper />
      <BackTypora />
      <ContextMenu />
      <Explorer />
      <FrontTypora />
      <Meter />
      <Annotations />
    </div>
  );
}
